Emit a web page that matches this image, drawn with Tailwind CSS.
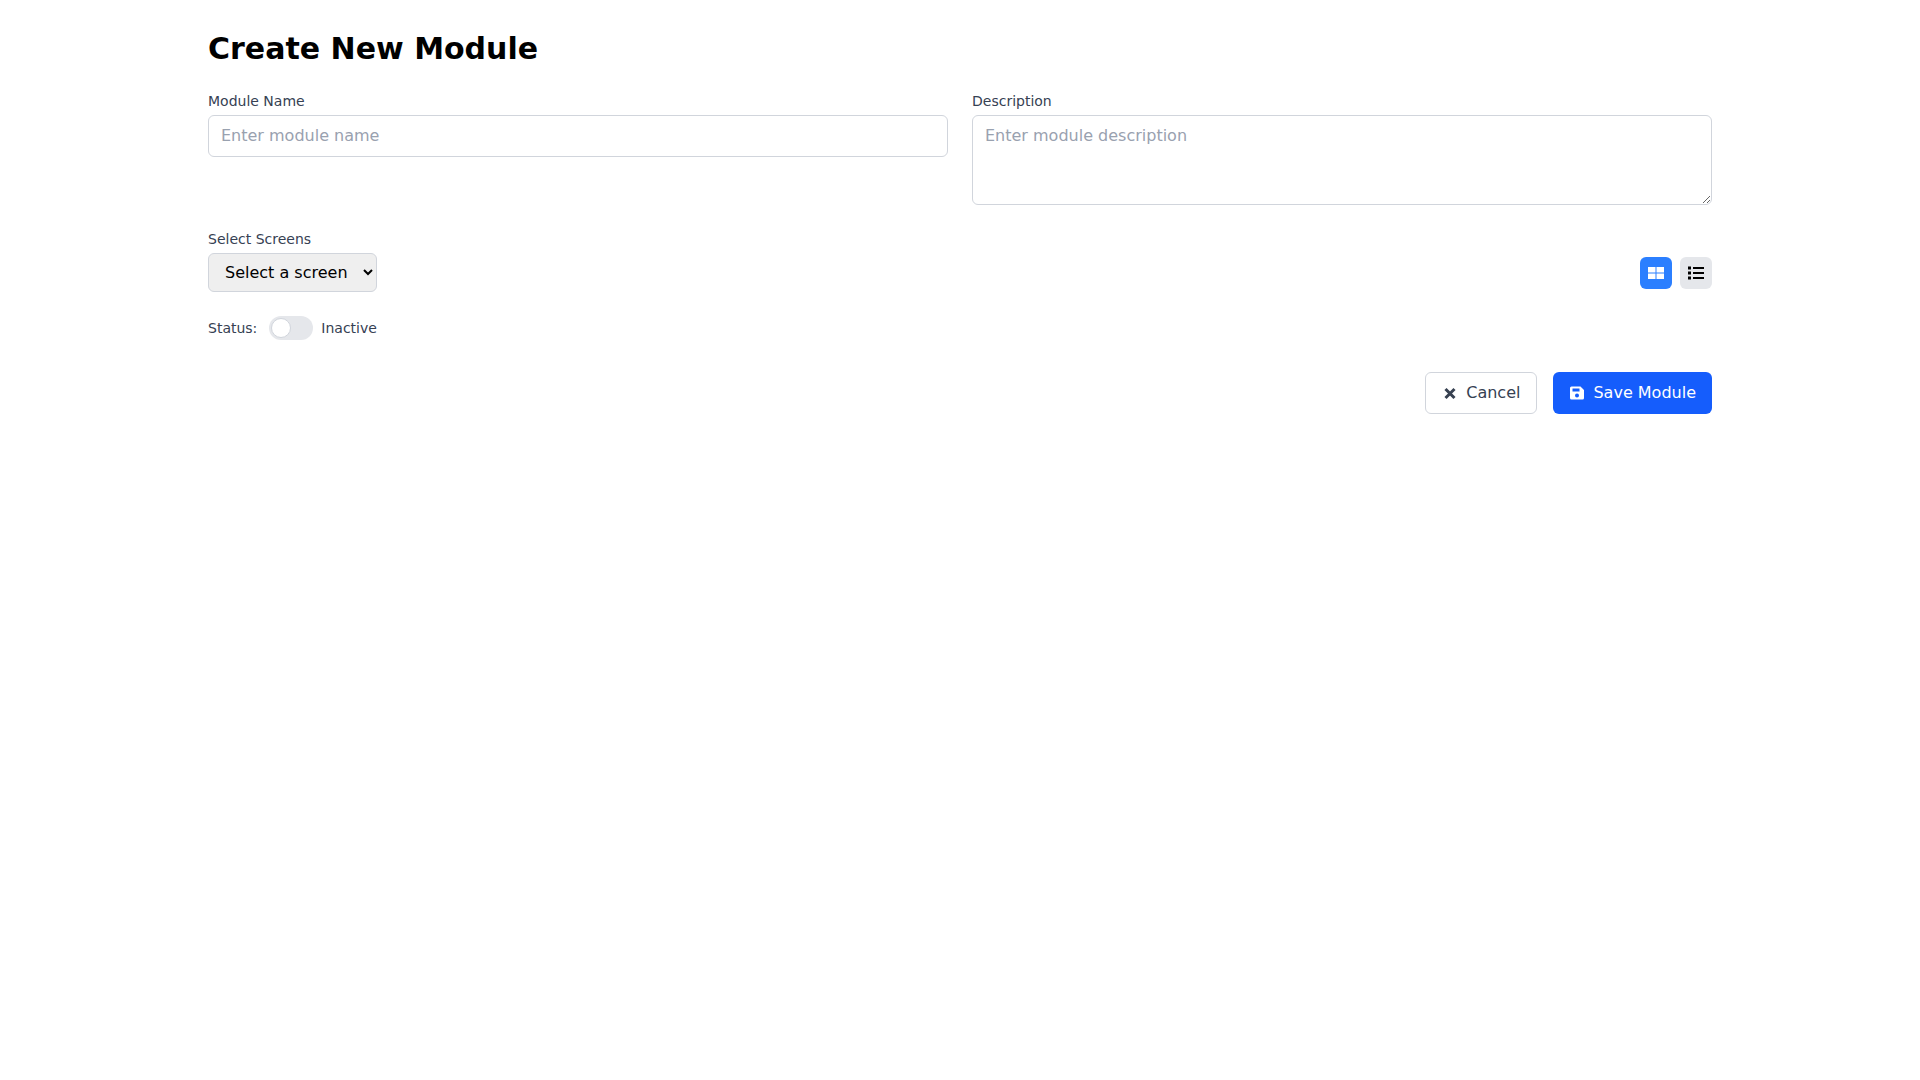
<!DOCTYPE html>
<html lang="en">
<head>
  <meta charset="UTF-8" />
  <title>Create New Module</title>
  <script src="https://cdn.jsdelivr.net/npm/@tailwindcss/browser@4"></script>
</head>
<body class="bg-white font-['DejaVu_Sans',sans-serif]">

  <div class="w-[1536px] mx-auto px-4 pt-[31px]">
    <h1 class="text-3xl font-bold text-black mb-6">Create New Module</h1>

    <!-- name + description -->
    <div class="grid grid-cols-2 gap-6 mb-6">
      <div>
        <label class="block text-sm text-gray-700 mb-1">Module Name</label>
        <input type="text" placeholder="Enter module name" class="w-full px-3 py-2 border border-gray-300 rounded-md placeholder:text-gray-400" />
      </div>
      <div>
        <label class="block text-sm text-gray-700 mb-1">Description</label>
        <textarea rows="3" placeholder="Enter module description" class="block w-full px-3 py-2 border border-gray-300 rounded-md placeholder:text-gray-400"></textarea>
      </div>
    </div>

    <!-- screens -->
    <div class="flex justify-between items-center mb-6">
      <div>
        <label class="block text-sm text-gray-700 mb-1">Select Screens</label>
        <select class="px-3 py-2 border border-gray-300 rounded-md bg-[#efefef] text-black">
          <option>Select a screen</option>
        </select>
      </div>
      <div class="flex gap-2 mt-[24px]">
        <button class="w-8 h-8 rounded-md bg-blue-500 flex items-center justify-center">
          <svg class="w-4 h-4" viewBox="0 0 16 16" fill="#fff"><path d="M0 2h7.5v5.5H0zM8.5 2H16v5.5H8.5zM0 8.5h7.5V14H0zM8.5 8.5H16V14H8.5z"/></svg>
        </button>
        <button class="w-8 h-8 rounded-md bg-gray-200 flex items-center justify-center">
          <svg class="w-4 h-4" viewBox="0 0 16 16" fill="#000"><path d="M0 1.5h3v3H0zM0 6.5h3v3H0zM0 11.500h3v3H0zM5 2h11v2H5zM5 7h11v2H5zM5 12h11v2H5z"/></svg>
        </button>
      </div>
    </div>

    <!-- status -->
    <div class="flex items-center mb-8">
      <span class="text-sm text-gray-700 mr-3">Status:</span>
      <div class="relative w-11 h-6 rounded-full bg-gray-200 mr-2">
        <span class="absolute left-[2px] top-[2px] w-5 h-5 rounded-full bg-white border border-gray-300"></span>
      </div>
      <span class="text-sm text-gray-700">Inactive</span>
    </div>

    <!-- actions -->
    <div class="flex justify-end gap-4">
      <button class="flex items-center gap-2 px-4 py-2 border border-gray-300 rounded-md text-gray-700 bg-white">
        <svg class="w-4 h-4" viewBox="0 0 16 16" fill="none" stroke="#374151" stroke-width="3"><path d="M3.500 4l9 9M12.500 4l-9 9"/></svg>
        Cancel
      </button>
      <button class="flex items-center gap-2 px-4 py-2 rounded-md text-white bg-blue-600">
        <svg class="w-4 h-4" viewBox="0 0 16 16" fill="#fff"><path fill-rule="evenodd" d="M2.500 1.500h9L15 5v8a1.500 1.500 0 0 1-1.500 1.500h-11A1.500 1.500 0 0 1 1 13V3a1.500 1.500 0 0 1 1.500-1.500zM3.500 3.500v3h7v-3zM8 8.500a2 2 0 1 0 0 4 2 2 0 0 0 0-4z"/></svg>
        Save Module
      </button>
    </div>
  </div>

</body>
</html>
